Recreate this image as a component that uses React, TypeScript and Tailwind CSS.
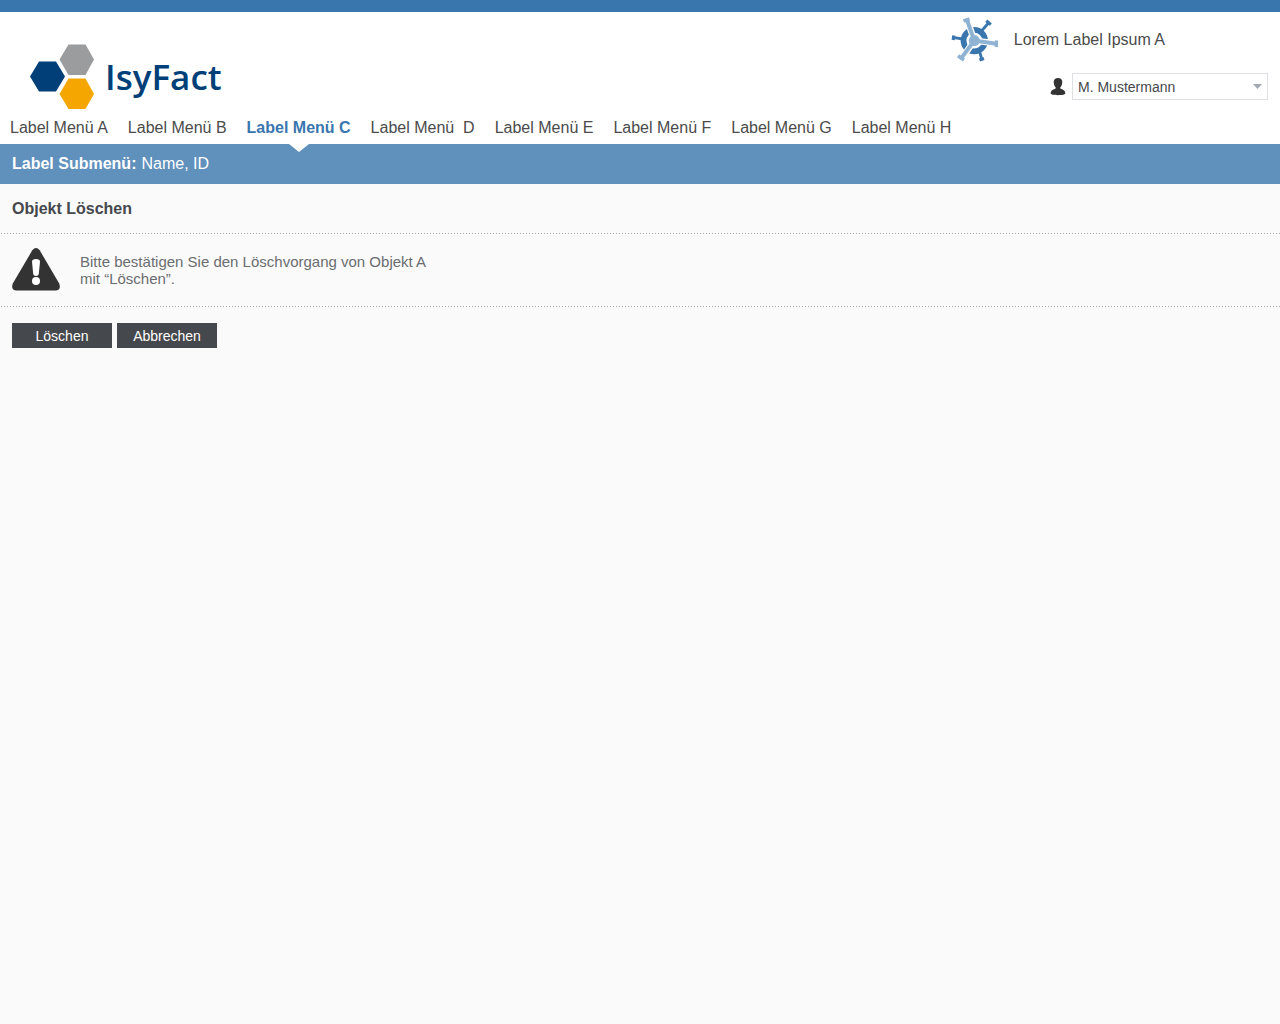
import React from "react";

const menu = [
  "Label Menü A",
  "Label Menü B",
  "Label Menü C",
  "Label Menü\u00a0 D",
  "Label Menü E",
  "Label Menü F",
  "Label Menü G",
  "Label Menü H",
];

function Logo() {
  return (
    <a href="#" className="flex items-center gap-2.5 text-[#003f78]">
      <svg width="65" height="66" viewBox="0 0 65 66" aria-hidden="true">
        <path d="M38.5 0.5H55.5L64 15.5L55.5 31H38.5L29.5 15.5Z" fill="#9b9c9e" />
        <path d="M9 17.500H26L35 32.500L26 47.500H9L0 32.500Z" fill="#003f78" />
        <path d="M38.5 34.500H55.5L64 50L55.5 65H38.5L29.5 50Z" fill="#f5a600" />
      </svg>
      <span className="font-['Open_Sans',sans-serif] text-[35px] leading-10 font-semibold">IsyFact</span>
    </a>
  );
}

function HubIcon() {
  return (
    <svg width="47" height="46" viewBox="0 0 47 46" aria-hidden="true">
      <g fill="none" stroke="#3a76ae">
        <circle cx="23.3" cy="23.6" r="10.8" strokeWidth="5.8" />
        <path d="M12 22L3 20.7M30 14.500L37.500 6M28 33L30.500 41" strokeWidth="2.8" />
        <path d="M2.8 18.500L2.200 23M35.300 3.800L39.800 7.600M28.500 43L33 41.400" strokeWidth="3.2" />
      </g>
      <path d="M23.3 23.6L16.300 3M23.3 23.6L46 26.500M23.3 23.6L10 42.500" stroke="#fff" strokeWidth="6.500" />
      <g fill="none" stroke="#8fb3d3">
        <path d="M23.3 23.6L16 3M23.3 23.6L45 26.700M23.3 23.6L10 41.500" strokeWidth="4" />
        <path d="M12.500 4L18.500 2M46 23.500L45.200 30M7 38.700L13 43" strokeWidth="3.600" />
      </g>
      <circle cx="23.3" cy="23.6" r="5.500" fill="#8fb3d3" />
    </svg>
  );
}

function Header() {
  return (
    <header className="border-t-12 border-[#3a76ae] bg-white">
      <div className="flex h-[98px] items-start justify-between pr-3 pl-[30px]">
        <div className="pt-8">
          <Logo />
        </div>
        <div className="flex flex-col">
          <div className="flex h-14 items-center gap-4 pr-[103px]">
            <HubIcon />
            <span className="text-base">Lorem Label Ipsum A</span>
          </div>
          <div className="mt-[5px] flex items-center justify-end gap-1.5">
            <label htmlFor="user" aria-label="Benutzer">
              <svg width="16" height="18" viewBox="0 0 16 18" fill="#333" aria-hidden="true">
                <path d="M8 0C5 0 3.600 1.700 3.700 4.300C3.800 6.600 4.600 8.300 5.700 9.400V10.600C4 11.600 0.700 12 0.700 15.300C0.700 16.600 4 17.200 8 17.200S15.300 16.600 15.300 15.300C15.300 12 12 11.600 10.300 10.600V9.400C11.400 8.300 12.200 6.600 12.300 4.300C12.400 1.700 11 0 8 0Z" />
              </svg>
            </label>
            <div className="relative">
              <select
                id="user"
                className="h-[27px] w-[196px] appearance-none border border-[#dddfe2] bg-white px-[5px] text-sm text-[#45484c]"
              >
                <option>M. Mustermann</option>
              </select>
              <svg
                className="pointer-events-none absolute top-[11px] right-1.5"
                width="9"
                height="5"
                viewBox="0 0 9 5"
                aria-hidden="true"
              >
                <path d="M0 0H9L4.500 5Z" fill="#a3a9b3" />
              </svg>
            </div>
          </div>
        </div>
      </div>
      <nav className="flex h-[34px] gap-5 px-2.5 leading-9">
        {menu.map((label, i) => (
          <a
            key={label}
            href="#"
            aria-current={i === 2 ? "page" : undefined}
            className={
              i === 2
                ? "relative h-full font-bold whitespace-nowrap text-[#3a76ae]"
                : "h-full whitespace-nowrap"
            }
          >
            {label}
            {i === 2 && (
              <svg
                className="absolute top-full left-1/2 -translate-x-1/2"
                width="20"
                height="8"
                viewBox="0 0 20 8"
                aria-hidden="true"
              >
                <path d="M0 0H20L10 8Z" fill="#fff" />
              </svg>
            )}
          </a>
        ))}
      </nav>
    </header>
  );
}

function WarningIcon() {
  return (
    <svg width="48" height="43" viewBox="0 0 48 43" className="shrink-0" aria-hidden="true">
      <path
        d="M20.300 2.300Q24 -2.200 27.700 2.300L47.200 35.500Q49.500 42 43.500 42.500H4.500Q-1.500 42 0.800 35.500Z"
        fill="#333"
      />
      <path d="M20 13.500Q20 11 24 11T28 13.500L26.800 26Q26.500 28 24 28T21.200 26Z" fill="#fff" />
      <circle cx="24" cy="33" r="4" fill="#fff" />
    </svg>
  );
}

function DottedLine() {
  return (
    <hr className="h-px border-0 bg-[repeating-linear-gradient(90deg,transparent_0_1px,#a6a8aa_1px_2px,transparent_2px_3px)]" />
  );
}

export default function App() {
  return (
    <div className="min-h-screen bg-[#fafafa] font-['Liberation_Sans',Arial,sans-serif] text-base text-[#4b4b4b]">
      <Header />
      <div className="flex h-10 items-center gap-[5px] bg-[#6090bc] px-3 text-white">
        <strong>Label Submenü:</strong>
        <span>Name, ID</span>
      </div>
      <main>
        <h1 className="flex h-[49px] items-center px-3 font-bold text-[#45484c]">Objekt Löschen</h1>
        <DottedLine />
        <div className="flex items-start gap-5 px-3 pt-3.5 pb-[15px]">
          <WarningIcon />
          <p className="pt-[5px] text-[15px] leading-[17px] text-[#6a6d70]">
            Bitte bestätigen Sie den Löschvorgang von Objekt A
            <br />
            mit “Löschen”.
          </p>
        </div>
        <DottedLine />
        <div className="flex gap-[5px] px-3 pt-4 text-sm text-white">
          <button type="button" className="h-[25px] w-[100px] bg-[#45484c]">
            Löschen
          </button>
          <button type="button" className="h-[25px] w-[100px] bg-[#45484c]">
            Abbrechen
          </button>
        </div>
      </main>
    </div>
  );
}
